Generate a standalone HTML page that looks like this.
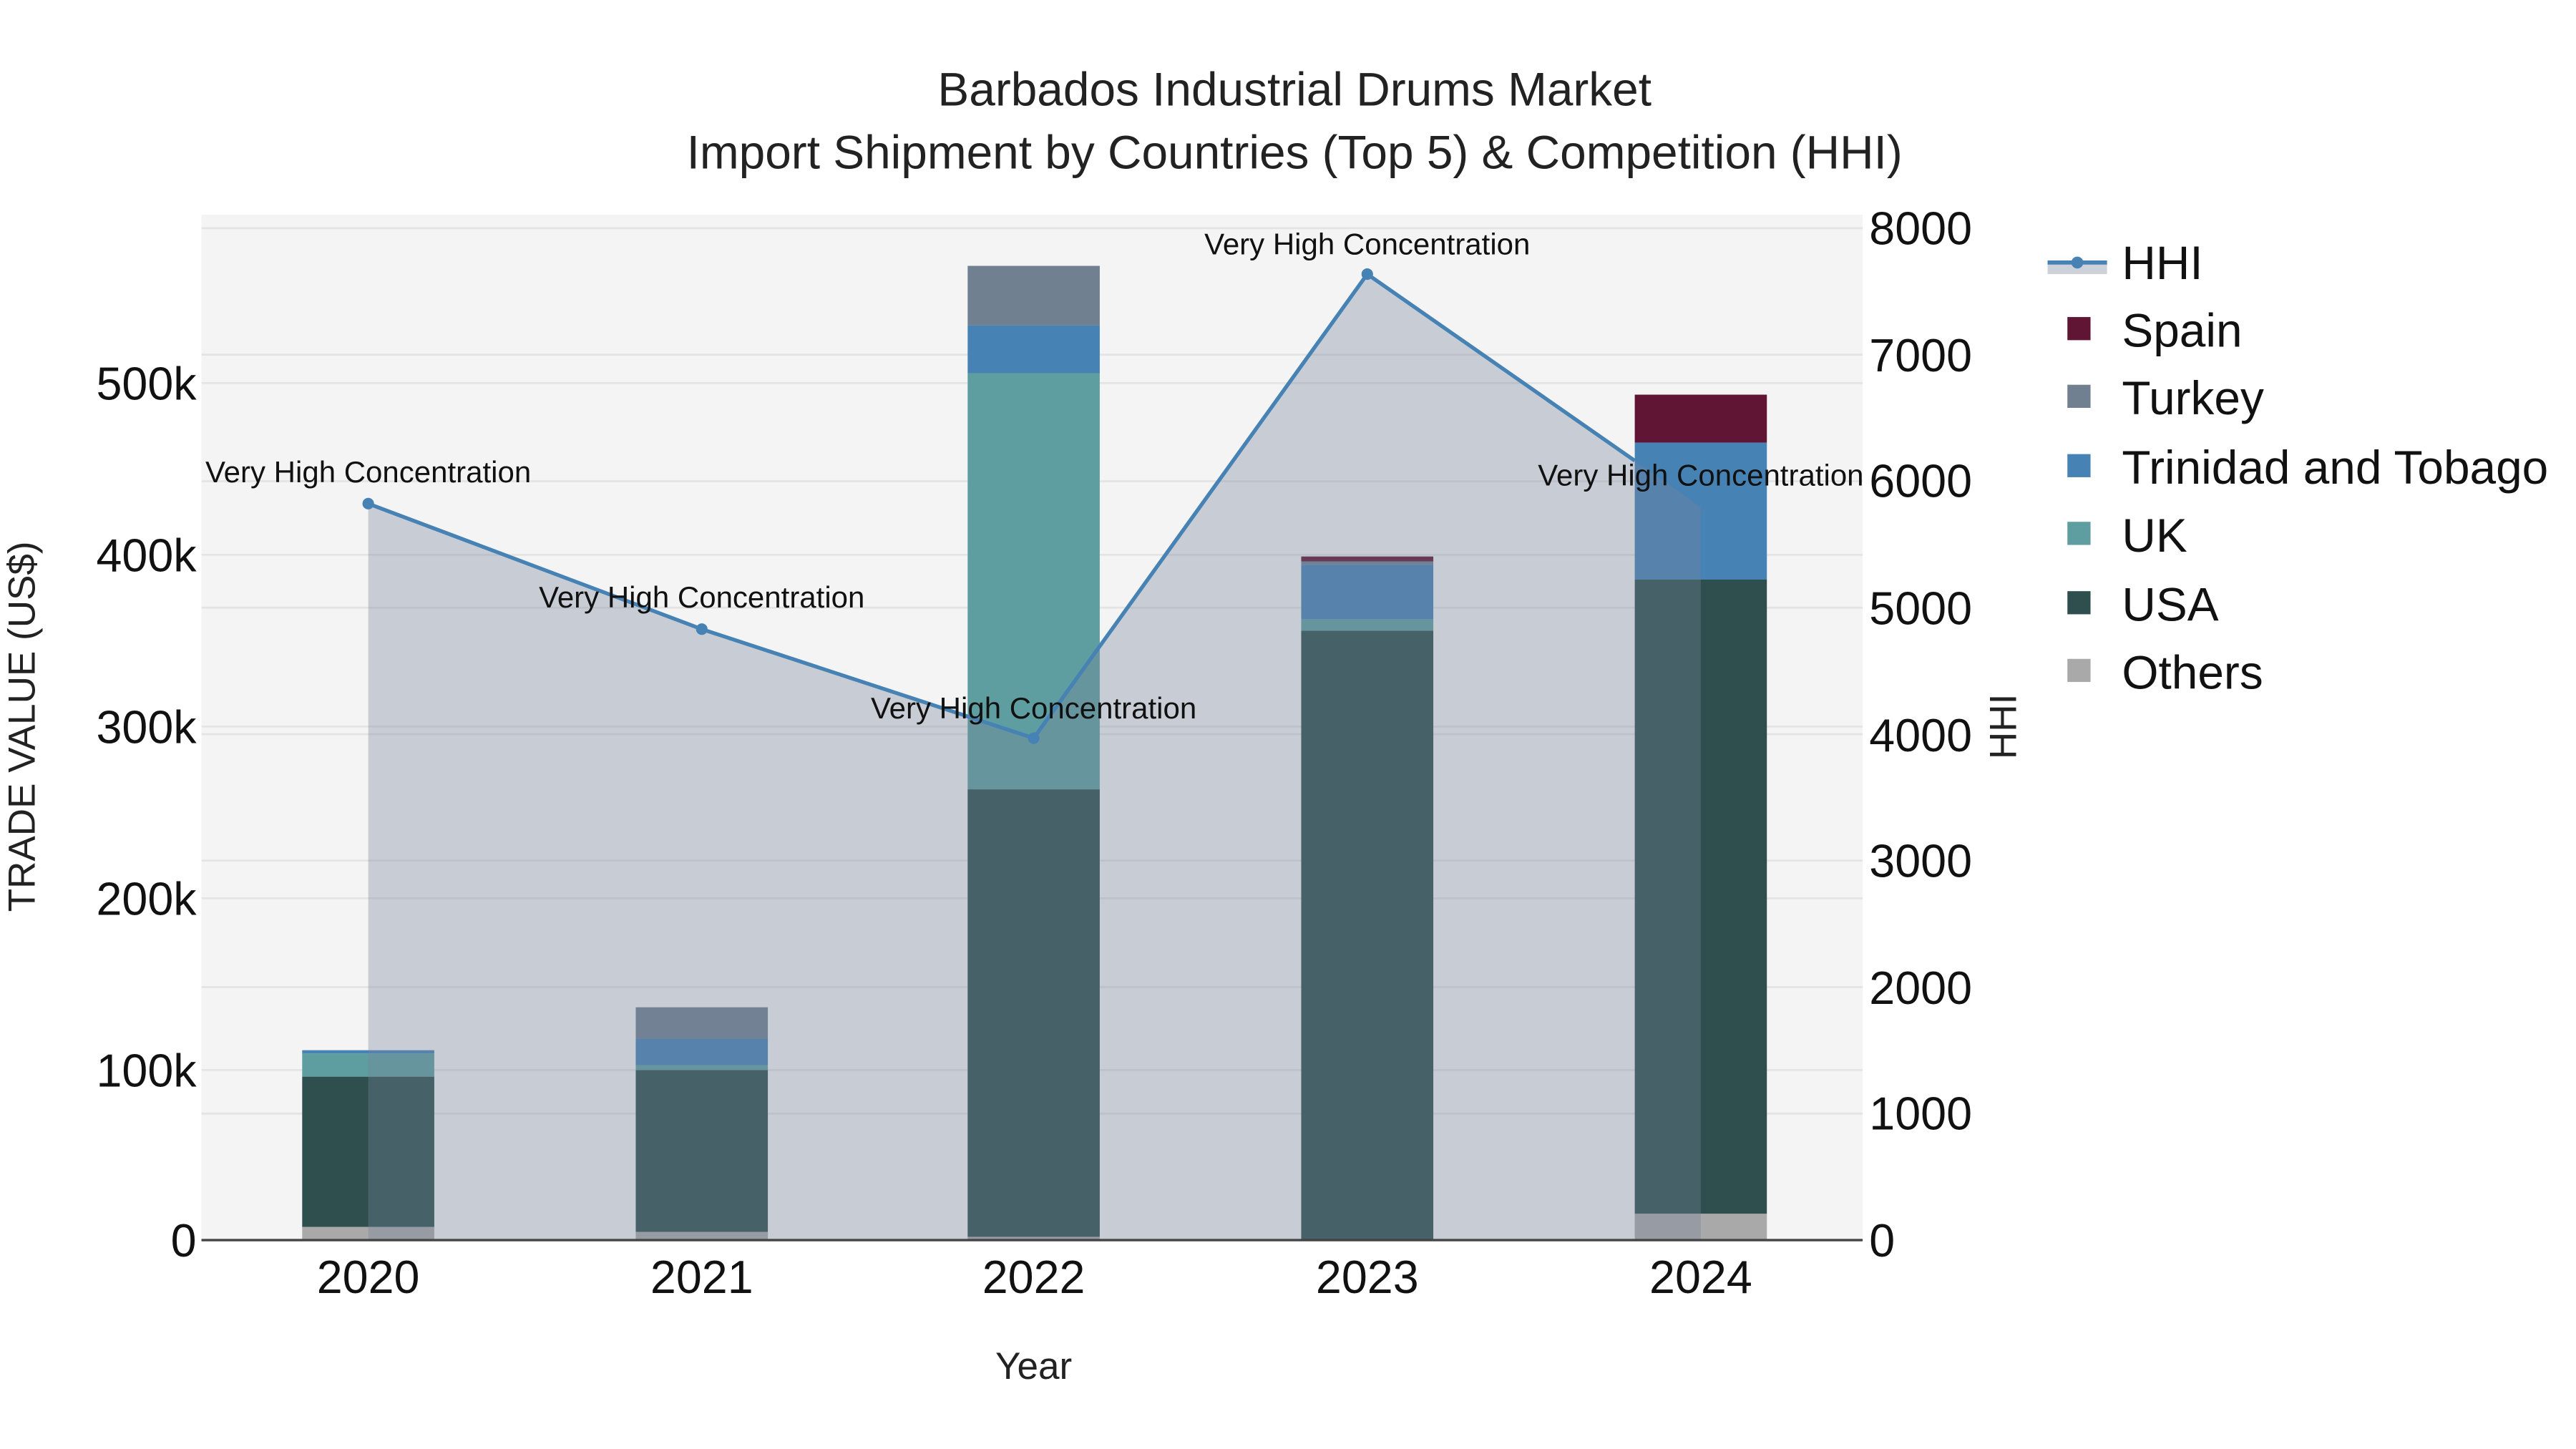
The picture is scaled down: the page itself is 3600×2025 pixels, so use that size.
<!DOCTYPE html>
<html><head><meta charset="utf-8"><style>html,body{margin:0;padding:0;background:#fff}svg{display:block}</style></head>
<body>
<svg width="3600" height="2025" viewBox="0 0 1560 877.5" xmlns="http://www.w3.org/2000/svg" font-family="Liberation Sans, sans-serif">
<rect width="1560" height="877.5" fill="#fff"/>
<rect x="122" y="130" width="1006" height="621" fill="#f4f4f4"/>
<g stroke="#e4e4e4" stroke-width="1.2">
<line x1="122" x2="1128" y1="648" y2="648"/><line x1="122" x2="1128" y1="544" y2="544"/>
<line x1="122" x2="1128" y1="440" y2="440"/><line x1="122" x2="1128" y1="336" y2="336"/>
<line x1="122" x2="1128" y1="232" y2="232"/>
<line x1="122" x2="1128" y1="674.4" y2="674.4"/><line x1="122" x2="1128" y1="597.8" y2="597.8"/>
<line x1="122" x2="1128" y1="521.2" y2="521.2"/><line x1="122" x2="1128" y1="444.6" y2="444.6"/>
<line x1="122" x2="1128" y1="368" y2="368"/><line x1="122" x2="1128" y1="291.4" y2="291.4"/>
<line x1="122" x2="1128" y1="214.8" y2="214.8"/><line x1="122" x2="1128" y1="138.2" y2="138.2"/>
</g>
<g>
<rect x="183" y="743" width="80" height="8" fill="#a9a9a9"/>
<rect x="183" y="652" width="80" height="91" fill="#2f4f4f"/>
<rect x="183" y="638" width="80" height="14" fill="#5f9ea0"/>
<rect x="183" y="636" width="80" height="2" fill="#4682b4"/>

<rect x="385" y="746" width="80" height="5" fill="#a9a9a9"/>
<rect x="385" y="648" width="80" height="98" fill="#2f4f4f"/>
<rect x="385" y="645" width="80" height="3" fill="#5f9ea0"/>
<rect x="385" y="629" width="80" height="16" fill="#4682b4"/>
<rect x="385" y="610" width="80" height="19" fill="#708090"/>

<rect x="586" y="749" width="80" height="2" fill="#a9a9a9"/>
<rect x="586" y="478" width="80" height="271" fill="#2f4f4f"/>
<rect x="586" y="226" width="80" height="252" fill="#5f9ea0"/>
<rect x="586" y="197" width="80" height="29" fill="#4682b4"/>
<rect x="586" y="161" width="80" height="36" fill="#708090"/>

<rect x="788" y="382" width="80" height="369" fill="#2f4f4f"/>
<rect x="788" y="375" width="80" height="7" fill="#5f9ea0"/>
<rect x="788" y="342" width="80" height="33" fill="#4682b4"/>
<rect x="788" y="340" width="80" height="2" fill="#708090"/>
<rect x="788" y="337" width="80" height="3" fill="#601535"/>

<rect x="990" y="735" width="80" height="16" fill="#a9a9a9"/>
<rect x="990" y="351" width="80" height="384" fill="#2f4f4f"/>
<rect x="990" y="268" width="80" height="83" fill="#4682b4"/>
<rect x="990" y="239" width="80" height="29" fill="#601535"/>
</g>
<polygon points="223,751 223,305 425,381 626,447 828,166 1030,307 1030,751" fill="rgba(118,132,155,0.35)"/>
<polyline points="223,305 425,381 626,447 828,166 990,279" fill="none" stroke="#4682b4" stroke-width="2.3"/>
<g fill="#4682b4"><circle cx="223" cy="305" r="3.5"/><circle cx="425" cy="381" r="3.5"/><circle cx="626" cy="447" r="3.5"/><circle cx="828" cy="166" r="3.5"/></g>
<line x1="122" x2="1128" y1="751" y2="751" stroke="#444" stroke-width="1.5"/>
<g font-size="18.2" text-anchor="middle" fill="#111">
<text x="223" y="292">Very High Concentration</text>
<text x="425" y="368">Very High Concentration</text>
<text x="626" y="435">Very High Concentration</text>
<text x="828" y="154">Very High Concentration</text>
<text x="1030" y="294">Very High Concentration</text>
</g>
<g font-size="28.5" text-anchor="middle" fill="#222">
<text x="784" y="64">Barbados Industrial Drums Market</text>
<text x="784" y="102">Import Shipment by Countries (Top 5) &amp; Competition (HHI)</text>
</g>
<g font-size="28" text-anchor="end" fill="#111">
<text x="119" y="761">0</text><text x="119" y="658">100k</text><text x="119" y="554">200k</text>
<text x="119" y="450">300k</text><text x="119" y="346">400k</text><text x="119" y="242">500k</text>
</g>
<g font-size="28" fill="#111">
<text x="1132" y="761">0</text><text x="1132" y="684">1000</text><text x="1132" y="608">2000</text>
<text x="1132" y="531">3000</text><text x="1132" y="455">4000</text><text x="1132" y="378">5000</text>
<text x="1132" y="301">6000</text><text x="1132" y="225">7000</text><text x="1132" y="148">8000</text>
</g>
<g font-size="28" text-anchor="middle" fill="#111">
<text x="223" y="783">2020</text><text x="425" y="783">2021</text><text x="626" y="783">2022</text>
<text x="828" y="783">2023</text><text x="1030" y="783">2024</text>
</g>
<text x="626" y="835" font-size="23" text-anchor="middle" fill="#222">Year</text>
<text transform="translate(21,440) rotate(-90)" font-size="23" text-anchor="middle" fill="#222">TRADE VALUE (US$)</text>
<text transform="translate(1221,440) rotate(-90)" font-size="23" text-anchor="middle" fill="#222">HHI</text>
<rect x="1240" y="158" width="36" height="8" fill="#cdd1d9"/>
<line x1="1240" x2="1276" y1="159" y2="159" stroke="#4682b4" stroke-width="2.5"/>
<circle cx="1258" cy="159" r="3.6" fill="#4682b4"/>
<g>
<rect x="1252" y="192" width="14" height="14" fill="#601535"/>
<rect x="1252" y="233" width="14" height="14" fill="#708090"/>
<rect x="1252" y="275" width="14" height="14" fill="#4682b4"/>
<rect x="1252" y="316" width="14" height="14" fill="#5f9ea0"/>
<rect x="1252" y="358" width="14" height="14" fill="#2f4f4f"/>
<rect x="1252" y="399" width="14" height="14" fill="#a9a9a9"/>
</g>
<g font-size="28.5" fill="#111">
<text x="1285" y="169">HHI</text><text x="1285" y="210">Spain</text><text x="1285" y="251">Turkey</text>
<text x="1285" y="293">Trinidad and Tobago</text><text x="1285" y="334">UK</text>
<text x="1285" y="376">USA</text><text x="1285" y="417">Others</text>
</g>
</svg>
</body></html>
